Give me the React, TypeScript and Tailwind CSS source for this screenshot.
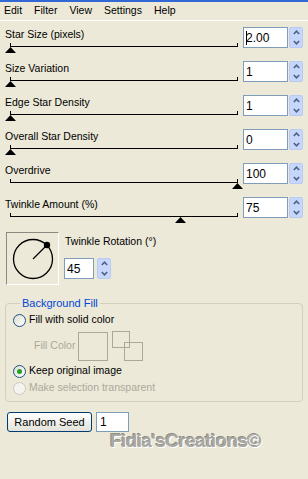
import React from "react";

const rows = [
  { label: "Star Size (pixels)", value: "2.00", pos: 0, caret: true },
  { label: "Size Variation", value: "1", pos: 0 },
  { label: "Edge Star Density", value: "1", pos: 0 },
  { label: "Overall Star Density", value: "0", pos: 0 },
  { label: "Overdrive", value: "100", pos: 1 },
  { label: "Twinkle Amount (%)", value: "75", pos: 0.75 },
];

function Spinner() {
  return (
    <div className="flex h-[21px] w-[14px] flex-col rounded-[2px] border border-[#b9cbf3] bg-[#c6d6fc]">
      <div className="flex flex-1 items-center justify-center">
        <svg width="7" height="5" viewBox="0 0 7 5">
          <path d="M0.8 4 L3.5 1.2 L6.2 4" stroke="#4d6185" strokeWidth="1.6" fill="none" />
        </svg>
      </div>
      <div className="flex flex-1 items-center justify-center">
        <svg width="7" height="5" viewBox="0 0 7 5">
          <path d="M0.8 1 L3.5 3.8 L6.2 1" stroke="#4d6185" strokeWidth="1.6" fill="none" />
        </svg>
      </div>
    </div>
  );
}

function NumBox({ value, caret, w }: { value: string; caret?: boolean; w: string }) {
  return (
    <div className={`flex h-[21px] ${w} items-center border border-[#7f9db9] bg-white pl-[2px] text-[12px] text-black`}>
      {caret && <span className="mr-[-1px] h-[14px] w-[1px] bg-black" />}
      {value}
    </div>
  );
}

function SliderRow({ label, value, pos, caret }: { label: string; value: string; pos: number; caret?: boolean }) {
  return (
    <div className="flex h-[34px]">
      <div className="flex w-[243px] flex-col pl-[5px]">
        <span className="mt-[1px] text-[10.5px] leading-[14px] text-black">{label}</span>
        <div className="relative h-[19px]">
          <div className="absolute left-[5px] top-[5px] h-[1px] w-[228px] bg-black" />
          <div className="absolute left-[5px] top-[2px] h-[4px] w-[1px] bg-black" />
          <div className="absolute left-[232px] top-[2px] h-[4px] w-[1px] bg-black" />
          <svg
            className="absolute top-[6px]"
            style={{ left: 5 + 227 * pos - 5 }}
            width="11"
            height="6"
            viewBox="0 0 11 6"
          >
            <path d="M5.5 0 L11 6 L0 6 Z" fill="#000" />
          </svg>
        </div>
      </div>
      <div className="mt-[1px] flex gap-[1px]">
        <NumBox value={value} caret={caret} w="w-[45px]" />
        <Spinner />
      </div>
    </div>
  );
}

function Radio({ checked, disabled }: { checked?: boolean; disabled?: boolean }) {
  return (
    <span
      className={`flex h-[13px] w-[13px] items-center justify-center rounded-full border ${
        disabled ? "border-[#cac8bb] bg-[#f4f3ee]" : "border-[#1c5180] bg-gradient-to-br from-[#dcdcd6] to-white"
      }`}
    >
      {checked && <span className="h-[5px] w-[5px] rounded-full bg-[#21a121]" />}
    </span>
  );
}

export default function App() {
  return (
    <div className="relative h-screen w-full overflow-hidden bg-[#ece9d8] font-['Liberation_Sans',Arial,sans-serif]">
      <div className="h-[2px] bg-[#3168d5]" />
      <div className="flex h-[19px] items-center gap-[12px] border-b border-white pl-[4px] text-[10.5px] text-black">
        <span>Edit</span>
        <span>Filter</span>
        <span>View</span>
        <span>Settings</span>
        <span>Help</span>
      </div>
      <div className="pt-[5px]">
        {rows.map((r) => (
          <SliderRow key={r.label} {...r} />
        ))}
      </div>

      <div className="mt-[2px] flex">
        <div className="ml-[6px] h-[53px] w-[53px] border border-b-white border-l-[#8a8a80] border-r-white border-t-[#8a8a80]">
          <svg width="51" height="51" viewBox="0 0 51 51">
            <circle cx="26" cy="26" r="19.5" stroke="#000" strokeWidth="1.3" fill="none" />
            <line x1="26" y1="26" x2="40" y2="12" stroke="#000" strokeWidth="1.3" />
            <circle cx="40" cy="12" r="3.2" fill="#000" />
          </svg>
        </div>
        <div className="ml-[5px] flex flex-col">
          <span className="mt-[2px] pl-[1px] text-[10.5px] leading-[14px] text-black">Twinkle Rotation (°)</span>
          <div className="mt-[10px] flex gap-[3px]">
            <NumBox value="45" w="w-[30px]" />
            <Spinner />
          </div>
        </div>
      </div>

      <fieldset className="mx-[5px] mt-[11px] rounded-[4px] border border-[#d0d0bf] pb-[6px] pl-[7px]">
        <legend className="ml-[7px] px-[2px] text-[11px] leading-[14px] text-[#0046d5]">Background Fill</legend>
        <div className="mt-[3px] flex h-[14px] items-center gap-[3px] text-[10.5px] text-black">
          <Radio />
          <span>Fill with solid color</span>
        </div>
        <div className="mt-[4px] flex items-center">
          <span className="w-[65px] pl-[21px] text-[10.5px] text-[#aca899]">Fill Color</span>
          <div className="h-[29px] w-[30px] border border-[#aca899]" />
          <div className="relative ml-[4px] h-[30px] w-[31px]">
            <div className="absolute left-0 top-0 h-[17px] w-[18px] border border-[#aca899]" />
            <div className="absolute left-[12px] top-[11px] h-[19px] w-[19px] border border-[#aca899]" />
          </div>
        </div>
        <div className="mt-[3px] flex h-[14px] items-center gap-[3px] text-[10.5px] text-black">
          <Radio checked />
          <span>Keep original image</span>
        </div>
        <div className="mt-[3px] flex h-[14px] items-center gap-[3px] text-[10.5px] text-[#aca899]">
          <Radio disabled />
          <span>Make selection transparent</span>
        </div>
      </fieldset>

      <div className="ml-[7px] mt-[10px] flex gap-[4px]">
        <button className="h-[20px] w-[85px] rounded-[3px] border border-[#003c74] bg-gradient-to-b from-white to-[#e3e3db] text-[11px] text-black">
          Random Seed
        </button>
        <div className="flex h-[20px] w-[33px] items-center border border-[#7f9db9] bg-white pl-[3px] text-[12px] text-black">
          1
        </div>
      </div>

      <div className="absolute left-[110px] top-[427px] text-[19px] font-bold tracking-[-0.6px] text-[#a9a8a2] [text-shadow:1px_1px_0_#fff,-1px_-1px_0_#8e8d86]">
        Fidia'sCreations©
      </div>
    </div>
  );
}
